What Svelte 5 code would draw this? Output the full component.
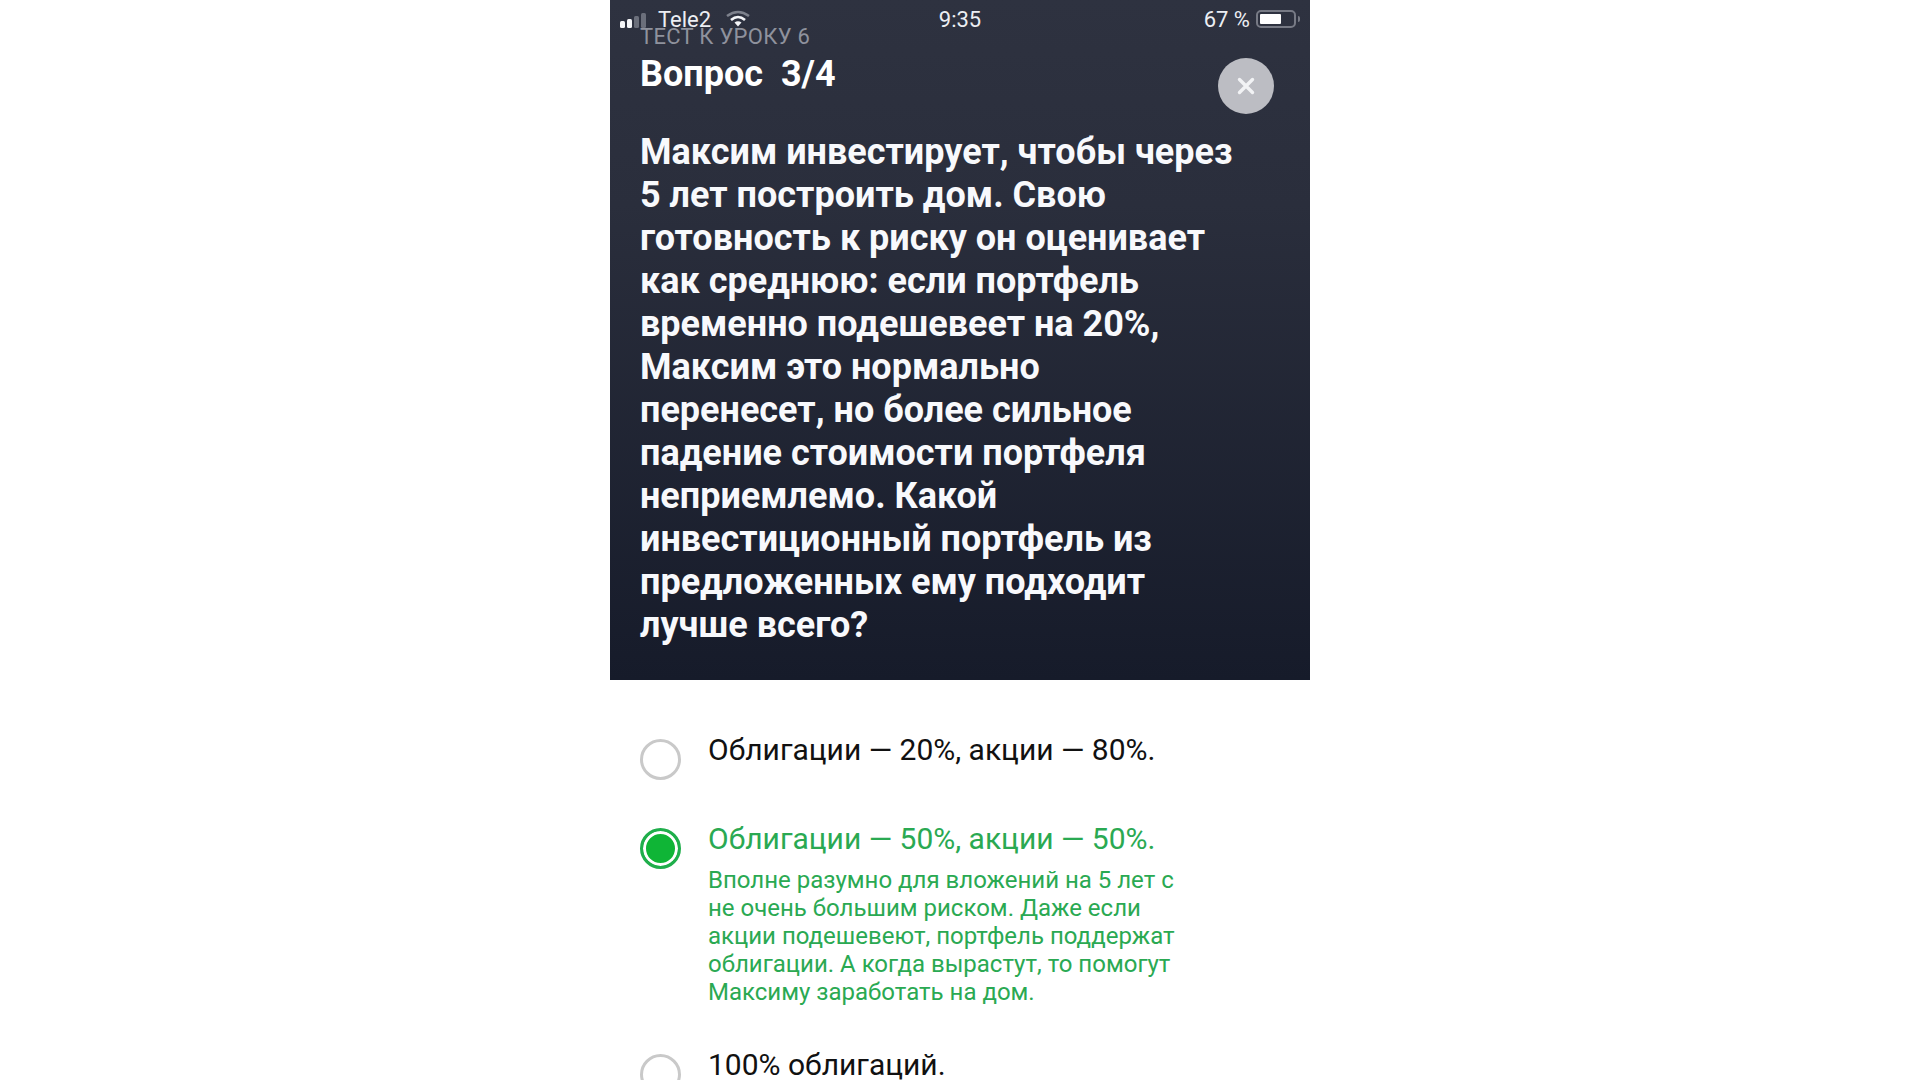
<script lang="ts">
  const questionLines = [
    'Максим инвестирует, чтобы через',
    '5 лет построить дом. Свою',
    'готовность к риску он оценивает',
    'как среднюю: если портфель',
    'временно подешевеет на 20%,',
    'Максим это нормально',
    'перенесет, но более сильное',
    'падение стоимости портфеля',
    'неприемлемо. Какой',
    'инвестиционный портфель из',
    'предложенных ему подходит',
    'лучше всего?'
  ];

  const hintLines = [
    'Вполне разумно для вложений на 5 лет с',
    'не очень большим риском. Даже если',
    'акции подешевеют, портфель поддержат',
    'облигации. А когда вырастут, то помогут',
    'Максиму заработать на дом.'
  ];
</script>

<main class="phone">
  <header class="hero">
    <div class="status-bar">
      <div class="status-left">
        <svg class="signal" width="32" height="16" viewBox="0 0 32 16">
          <rect x="0" y="9" width="5" height="7" rx="1.5" fill="#f4f5f8" />
          <rect x="7" y="7" width="5" height="9" rx="1.5" fill="#f4f5f8" />
          <rect x="14" y="4" width="5" height="12" rx="1.5" fill="#6b6f7b" />
          <rect x="21" y="1" width="5" height="15" rx="1.5" fill="#6b6f7b" />
        </svg>
        <span class="carrier">Tele2</span>
        <svg class="wifi" width="26" height="18" viewBox="0 0 26 18" fill="none">
          <path d="M2 6 Q13 -2 24 6" stroke="#7d818c" stroke-width="2.6" />
          <path d="M6 10 Q13 4 20 10" stroke="#f4f5f8" stroke-width="2.6" />
          <path d="M9.5 12.5 L13 16.5 L16.5 12.5 Q13 10 9.5 12.5 Z" fill="#f4f5f8" />
        </svg>
      </div>
      <span class="clock">9:35</span>
      <div class="status-right">
        <span class="percent">67 %</span>
        <div class="battery"><div class="battery-level" style="width: 67%"></div></div>
        <div class="battery-cap"></div>
      </div>
    </div>

    <div class="eyebrow">ТЕСТ К УРОКУ 6</div>
    <div class="title-row">
      <h1>Вопрос&nbsp; 3/4</h1>
      <button class="close" aria-label="Закрыть">
        <svg width="20" height="20" viewBox="0 0 20 20">
          <path d="M3.5 3.5 L16.5 16.5 M16.5 3.5 L3.5 16.5" stroke="#f2f3f5" stroke-width="3.4" stroke-linecap="round" />
        </svg>
      </button>
    </div>

    <h2 class="question">
      {#each questionLines as line}
        <span class="line">{line}</span>
      {/each}
    </h2>
  </header>

  <section class="answers">
    <div class="answer">
      <span class="radio"></span>
      <div class="answer-text">Облигации — 20%, акции — 80%.</div>
    </div>

    <div class="answer selected">
      <span class="radio"></span>
      <div>
        <div class="answer-text">Облигации — 50%, акции — 50%.</div>
        <p class="hint">
          {#each hintLines as line}
            <span class="line">{line}</span>
          {/each}
        </p>
      </div>
    </div>

    <div class="answer">
      <span class="radio"></span>
      <div class="answer-text">100% облигаций.</div>
    </div>
  </section>
</main>

<style>
  :global(body) {
    margin: 0;
    background: #fff;
    overflow: hidden;
  }

  .phone {
    width: 700px;
    height: 1080px;
    margin: 0 auto;
    transform: translateX(0);
    font-family: Roboto, "Liberation Sans", sans-serif;
    overflow: hidden;
  }

  .hero {
    position: relative;
    height: 680px;
    box-sizing: border-box;
    padding: 25px 30px 0;
    background: linear-gradient(180deg, #2e3240 0%, #2a2e3c 30%, #161b2a 100%);
    color: #fff;
  }

  .status-bar {
    position: absolute;
    top: 0;
    left: 0;
    right: 0;
    height: 38px;
    display: grid;
    grid-template-columns: 1fr auto 1fr;
    align-items: center;
    padding: 0 10px;
    font-size: 22px;
    color: #eceef3;
  }

  .status-left {
    display: flex;
    align-items: center;
    gap: 6px;
  }

  .carrier {
    margin-right: 8px;
  }

  .signal {
    margin-top: 1px;
  }

  .status-right {
    display: flex;
    align-items: center;
    justify-content: flex-end;
  }

  .percent {
    margin-right: 6px;
  }

  .battery {
    width: 40px;
    height: 18px;
    box-sizing: border-box;
    padding: 2px;
    border: 2px solid #777a85;
    border-radius: 5px;
  }

  .battery-level {
    height: 100%;
    background: #fff;
    border-radius: 1px;
  }

  .battery-cap {
    width: 2px;
    height: 6px;
    margin-left: 2px;
    background: #777a85;
    border-radius: 0 2px 2px 0;
  }

  .eyebrow {
    font-size: 22px;
    line-height: 24px;
    color: #8f929d;
    letter-spacing: 0.3px;
  }

  .title-row {
    display: flex;
    justify-content: space-between;
    align-items: flex-start;
    padding: 4px 6px 0 0;
  }

  h1 {
    margin: 0;
    font-size: 36px;
    line-height: 42px;
    font-weight: 700;
  }

  .close {
    width: 56px;
    height: 56px;
    margin-top: 5px;
    padding: 0;
    display: flex;
    align-items: center;
    justify-content: center;
    border: none;
    border-radius: 50%;
    background: #bcbdc3;
  }

  .question {
    margin: 17px 0 0;
    font-size: 36px;
    line-height: 43px;
    font-weight: 700;
    color: #f8f9fc;
  }

  .line {
    display: block;
    white-space: nowrap;
  }

  .answers {
    display: flex;
    flex-direction: column;
    padding: 52px 30px 0;
  }

  .answer {
    display: flex;
    gap: 27px;
    margin-bottom: 41px;
  }

  .radio {
    flex: none;
    width: 41px;
    height: 41px;
    box-sizing: border-box;
    margin-top: 7px;
    border: 3px solid #c9c9c9;
    border-radius: 50%;
    background: #fff;
  }

  .answer-text {
    font-size: 30px;
    line-height: 36px;
    color: #111;
  }

  .selected .answer-text {
    color: #2aa952;
  }

  .selected .radio {
    border-color: #1fae4b;
    background: #0fb536;
    box-shadow: inset 0 0 0 3px #fff;
  }

  .hint {
    margin: 9px 0 0;
    font-size: 24px;
    line-height: 28px;
    color: #2aa952;
  }
</style>
